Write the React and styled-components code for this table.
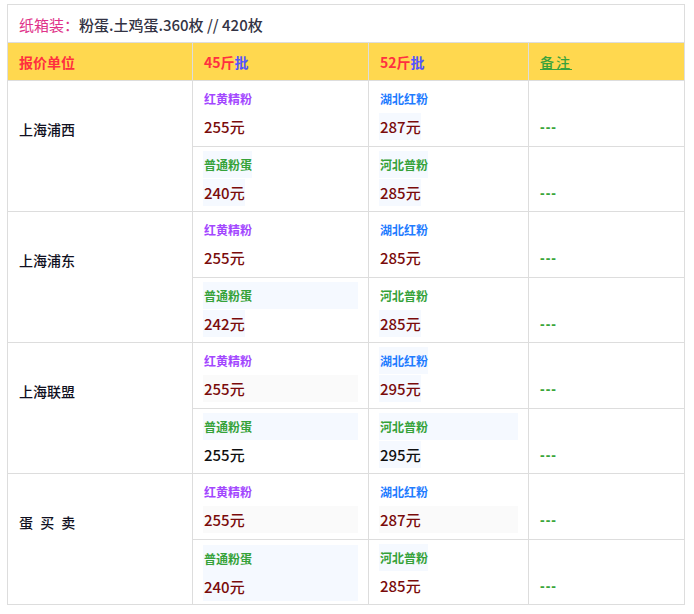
import React from 'react';
import styled, { createGlobalStyle, css } from 'styled-components';

const GlobalStyle = createGlobalStyle`
  body {
    margin: 0;
    background: #fff;
    font-family: "Noto Sans CJK SC", "Liberation Sans", sans-serif;
  }
`;

const BORDER = '#dddddd';

const labelColors = {
  purple: '#a347ff',
  blue: '#1f7cff',
  green: '#36a23a',
};

const shades = {
  blue: '#f5f9ff',
  gray: '#fafafa',
};

const groups = [
  {
    name: '上海浦西',
    rows: [
      [
        { label: '红黄精粉', kind: 'purple', price: '255元' },
        { label: '湖北红粉', kind: 'blue', price: '287元', priceShade: 'inline' },
      ],
      [
        { label: '普通粉蛋', kind: 'green', price: '240元', labelShade: 'inline', priceShade: 'inline' },
        { label: '河北普粉', kind: 'green', price: '285元', labelShade: 'inline', priceShade: 'inline' },
      ],
    ],
  },
  {
    name: '上海浦东',
    rows: [
      [
        { label: '红黄精粉', kind: 'purple', price: '255元' },
        { label: '湖北红粉', kind: 'blue', price: '285元' },
      ],
      [
        { label: '普通粉蛋', kind: 'green', price: '242元', labelShade: 'wide', priceShade: 'inline' },
        { label: '河北普粉', kind: 'green', price: '285元', priceShade: 'inline' },
      ],
    ],
  },
  {
    name: '上海联盟',
    rows: [
      [
        { label: '红黄精粉', kind: 'purple', price: '255元', priceShade: 'wideGray' },
        { label: '湖北红粉', kind: 'blue', price: '295元', labelShade: 'inline', priceShade: 'inline' },
      ],
      [
        { label: '普通粉蛋', kind: 'green', price: '255元', labelShade: 'wide', dark: true },
        { label: '河北普粉', kind: 'green', price: '295元', labelShade: 'wide', priceShade: 'inline', dark: true },
      ],
    ],
  },
  {
    name: '蛋 买 卖',
    spaced: true,
    rows: [
      [
        { label: '红黄精粉', kind: 'purple', price: '255元', priceShade: 'wideGray' },
        { label: '湖北红粉', kind: 'blue', price: '287元', priceShade: 'wideGray' },
      ],
      [
        { label: '普通粉蛋', kind: 'green', price: '240元', fill: true },
        { label: '河北普粉', kind: 'green', price: '285元', labelShade: 'inline' },
      ],
    ],
  },
];

const Page = styled.div`
  padding: 4px 0 0 7px;
`;

const Table = styled.div`
  box-sizing: border-box;
  width: 678px;
  border: 1px solid ${BORDER};
  border-bottom: none;
`;

const TitleRow = styled.div`
  height: 37px;
  border-bottom: 1px solid ${BORDER};
  padding-left: 11px;
  line-height: 39px;
  font-size: 15px;
  font-weight: 500;
  color: #333344;
`;

const TitleKey = styled.span`
  color: #e0338a;
  font-weight: normal;
`;

const Grid = styled.div`
  display: grid;
  grid-template-columns: 185px 176px 160px 155px;
`;

const HeadCell = styled.div`
  box-sizing: border-box;
  height: 38px;
  background: #ffd84f;
  border-bottom: 1px solid ${BORDER};
  border-right: ${(p) => (p.$last ? 'none' : `1px solid ${BORDER}`)};
  padding-left: 11px;
  line-height: 39px;
  font-size: 14px;
  font-weight: bold;
  color: #ff2f3f;
`;

const Blue = styled.span`
  color: #5353ff;
`;

const Note = styled.span`
  color: #38a23c;
  font-weight: 500;
  text-decoration: underline;
  letter-spacing: 2px;
`;

const GroupCell = styled.div`
  box-sizing: border-box;
  grid-row: span 2;
  border-right: 1px solid ${BORDER};
  border-bottom: 1px solid ${BORDER};
  padding: 35px 0 0 11px;
  font-size: 14px;
  font-weight: 500;
  line-height: 27px;
  color: #111122;
  letter-spacing: ${(p) => (p.$spaced ? '2px' : '0')};
  white-space: pre;
`;

const Cell = styled.div`
  box-sizing: border-box;
  height: ${(p) => p.$h}px;
  border-right: ${(p) => (p.$last ? 'none' : `1px solid ${BORDER}`)};
  border-bottom: 1px solid ${BORDER};
  padding: 4px 10px 0 ${(p) => (p.$last ? 11 : 10)}px;
`;

const FillBlock = styled.div`
  background: ${shades.blue};
  margin-top: 1px;
  padding-bottom: 1px;
`;

const shadeCss = (shade) => {
  if (shade === 'wide') return css`display: block; background: ${shades.blue};`;
  if (shade === 'wideGray') return css`display: block; background: ${shades.gray};`;
  if (shade === 'inline') return css`display: inline-block; background: ${shades.blue};`;
  return css`display: block;`;
};

const Label = styled.div`
  line-height: 27px;
  font-size: 12px;
  font-weight: bold;
  color: ${(p) => labelColors[p.$kind]};
  > span {
    ${(p) => shadeCss(p.$shade)}
    padding-left: 1px;
  }
`;

const Price = styled.div`
  margin-top: 1px;
  line-height: 27px;
  font-size: 15px;
  font-weight: 500;
  color: ${(p) => (p.$dark ? '#111111' : '#7a0b0b')};
  > span {
    ${(p) => shadeCss(p.$shade)}
    padding-left: 1px;
  }
`;

const Dash = styled.div`
  margin-top: 29px;
  line-height: 27px;
  font-family: "Liberation Sans", sans-serif;
  font-size: 14px;
  font-weight: bold;
  letter-spacing: 1px;
  color: #3aa63a;
`;

const Entry = ({ item }) => {
  const body = (
    <>
      <Label $kind={item.kind} $shade={item.labelShade}>
        <span>{item.label}</span>
      </Label>
      <Price $dark={item.dark} $shade={item.priceShade}>
        <span>{item.price}</span>
      </Price>
    </>
  );
  return item.fill ? <FillBlock>{body}</FillBlock> : body;
};

export default function App() {
  return (
    <Page>
      <GlobalStyle />
      <Table>
        <TitleRow>
          <TitleKey>纸箱装：</TitleKey>粉蛋.土鸡蛋.360枚 // 420枚
        </TitleRow>
        <Grid>
          <HeadCell>报价单位</HeadCell>
          <HeadCell>
            45斤<Blue>批</Blue>
          </HeadCell>
          <HeadCell>
            52斤<Blue>批</Blue>
          </HeadCell>
          <HeadCell $last>
            <Note>备注</Note>
          </HeadCell>
          {groups.map((g) => (
            <React.Fragment key={g.name}>
              <GroupCell $spaced={g.spaced}>{g.name}</GroupCell>
              {g.rows.map((row, i) => {
                const h = i === 0 ? 66 : 65;
                return (
                  <React.Fragment key={i}>
                    <Cell $h={h} style={{ gridColumn: 2 }}>
                      <Entry item={row[0]} />
                    </Cell>
                    <Cell $h={h}>
                      <Entry item={row[1]} />
                    </Cell>
                    <Cell $h={h} $last>
                      <Dash>---</Dash>
                    </Cell>
                  </React.Fragment>
                );
              })}
            </React.Fragment>
          ))}
        </Grid>
      </Table>
    </Page>
  );
}
